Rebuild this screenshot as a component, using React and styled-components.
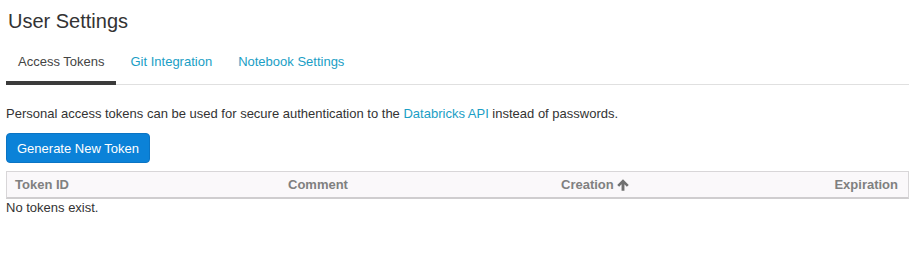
import styled, { createGlobalStyle } from "styled-components";

const Global = createGlobalStyle`
  body {
    margin: 0;
    background: #fff;
    font-family: "Liberation Sans", Arial, sans-serif;
    color: #333;
  }
`;

export default function App() {
  const tabs = ["Access Tokens", "Git Integration", "Notebook Settings"];
  const columns = [
    { label: "Token ID" },
    { label: "Comment" },
    { label: "Creation", sorted: true },
    { label: "Expiration", right: true },
  ];

  return (
    <Page>
      <Global />
      <Title>User Settings</Title>

      <Tabs>
        {tabs.map((t, i) => (
          <Tab key={t} active={i === 0}>
            {t}
          </Tab>
        ))}
      </Tabs>

      <Intro>
        Personal access tokens can be used for secure authentication to the{" "}
        <Link href="#">Databricks API</Link> instead of passwords.
      </Intro>

      <Button>Generate New Token</Button>

      <Table>
        <HeadRow>
          {columns.map((c) => (
            <HeadCell key={c.label} right={c.right}>
              {c.label}
              {c.sorted && (
                <svg width="12" height="12" viewBox="0 0 10 10">
                  <path d="M5 0.3 L9.8 5.1 L8.2 6.4 L6.2 4.3 L6.2 9.7 L3.8 9.7 L3.8 4.3 L1.8 6.4 L0.2 5.1 Z" fill="#707070" />
                </svg>
              )}
            </HeadCell>
          ))}
        </HeadRow>
        <Empty>No tokens exist.</Empty>
      </Table>
    </Page>
  );
}

const Page = styled.div`
  padding: 9px 0 0 6px;
`;

const Title = styled.h1`
  margin: 0 0 0 2px;
  font-size: 20px;
  font-weight: 400;
  line-height: 24px;
  color: #333;
`;

const Tabs = styled.div`
  display: flex;
  margin-top: 11px;
  border-bottom: 1px solid #e0e0e0;
`;

const Tab = styled.div`
  padding: 10px 12px 12px;
  margin-right: 2px;
  font-size: 13px;
  line-height: 15px;
  color: ${(p) => (p.active ? "#444" : "#1a9ec5")};
  border-bottom: 4px solid ${(p) => (p.active ? "#3b3b3b" : "transparent")};
  margin-bottom: -1px;
`;

const Intro = styled.p`
  margin: 21px 0 0;
  font-size: 13px;
  line-height: 15px;
  color: #333;
`;

const Link = styled.a`
  color: #1a9ec5;
  text-decoration: none;
`;

const Button = styled.button`
  display: block;
  margin-top: 12px;
  height: 30px;
  padding: 0 10px;
  border: 1px solid #0a74c4;
  border-radius: 4px;
  background: #0b82d8;
  color: #fff;
  font-family: inherit;
  font-size: 13px;
`;

const Table = styled.div`
  margin-top: 8px;
  width: 903px;
`;

const HeadRow = styled.div`
  display: grid;
  grid-template-columns: 273px 273px 273px 1fr;
  height: 25px;
  align-items: center;
  background: #faf8fa;
  border: 1px solid #d8d6d8;
  border-bottom: 2px solid #cfcdcf;
`;

const HeadCell = styled.div`
  display: flex;
  align-items: center;
  gap: 3px;
  justify-content: ${(p) => (p.right ? "flex-end" : "flex-start")};
  padding: 0 10px 0 8px;
  font-size: 13px;
  font-weight: 700;
  color: #808080;
`;

const Empty = styled.div`
  padding-top: 1px;
  font-size: 13px;
  line-height: 15px;
  color: #333;
`;
